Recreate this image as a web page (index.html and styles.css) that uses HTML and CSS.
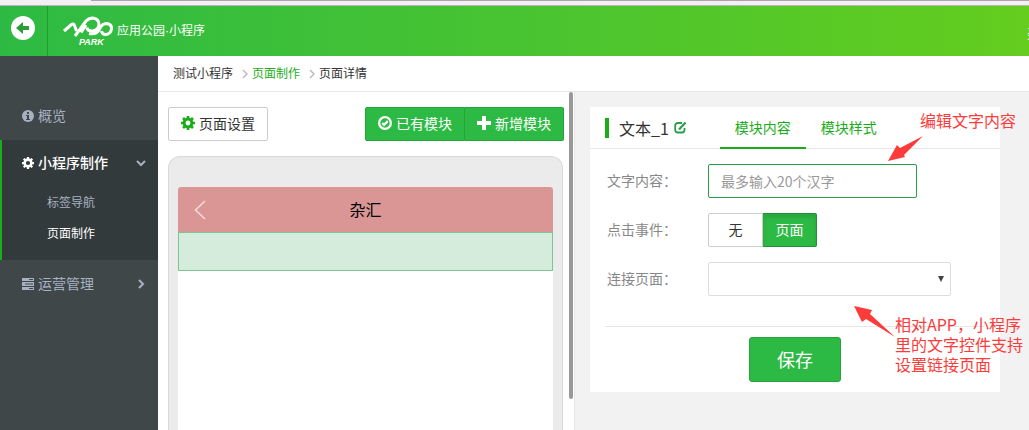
FILE: index.html
```html
<!DOCTYPE html>
<html lang="zh-CN">
<head>
    <meta charset="UTF-8">
    <meta name="viewport" content="width=device-width, initial-scale=1.0">
    <title>应用公园·小程序</title>
    <link rel="stylesheet" href="styles.css">
</head>
<body>
    <div class="strip"><div class="strip_line"></div></div>
    <header class="header">
        <a class="back" href="#" aria-label="返回">
            <svg width="24" height="24" viewBox="0 0 24 24"><circle cx="12" cy="12" r="12" fill="#fff"/><path d="M5 12l7-6v4h6v4h-6v4z" fill="#2b9f35"/></svg>
        </a>
        <a class="logo" href="#">
            <svg width="50" height="30" viewBox="0 0 50 30" fill="none" stroke="#fff" stroke-width="3">
                <path d="M1 15L8.500 8.500Q10.500 7 11.500 9.500L13.500 15M12 20L23 5Q26 2 30 2Q36 3 36 8.500Q35.500 14 30 15Q24.500 15.500 24 11.500M23 9L18 16.500"/>
                <path d="M26 17.500Q33 19 36 14L38 10.500Q40 7.500 44 7.500Q49 8.500 48.500 13Q47.500 18.500 42.500 18.500Q39 18.500 38.500 15"/>
                <text x="16" y="29" class="logo_sub">PARK</text>
            </svg>
            <span>应用公园·小程序</span>
        </a>
        <a class="user" href="#">美</a>
    </header>
    <div class="layout">
        <nav class="sidebar">
            <a class="menu" href="#">
                <svg width="12" height="12" viewBox="0 0 12 12"><circle cx="6" cy="6" r="6" fill="currentColor"/><path d="M5 2h2v2H5zM4 5h3v4h1v1H4V9h1V6H4z" fill="#404748"/></svg>
                <span>概览</span>
            </a>
            <div class="group">
                <a class="menu on" href="#">
                    <svg width="12" height="12" viewBox="0 0 16 16"><use href="#gear"/></svg>
                    <span>小程序制作</span>
                    <svg class="arrow" width="10" height="10" viewBox="0 0 10 10"><path d="M1 3l4 4 4-4" fill="none" stroke="#a7b1c2" stroke-width="2"/></svg>
                </a>
                <a class="sub" href="#">标签导航</a>
                <a class="sub on" href="#">页面制作</a>
            </div>
            <a class="menu" href="#">
                <svg width="12" height="12" viewBox="0 0 12 12"><path d="M0 0h12v3H0zM0 4h12v4H0zM0 9h12v3H0z" fill="currentColor"/><path d="M7 1.500h4M3 6h8M7 10.500h4" stroke="#404748"/></svg>
                <span>运营管理</span>
                <svg class="arrow" width="10" height="10" viewBox="0 0 10 10"><path d="M3 1l4 4-4 4" fill="none" stroke="#a7b1c2" stroke-width="2"/></svg>
            </a>
        </nav>
        <main class="main">
            <div class="crumbs">
                <span>测试小程序</span>
                <svg width="6" height="10" viewBox="0 0 6 10"><path d="M1 1l4 4-4 4" fill="none" stroke="#bbb" stroke-width="1.500"/></svg>
                <a href="#">页面制作</a>
                <svg width="6" height="10" viewBox="0 0 6 10"><path d="M1 1l4 4-4 4" fill="none" stroke="#bbb" stroke-width="1.500"/></svg>
                <span>页面详情</span>
            </div>
            <div class="work">
                <section class="preview">
                    <div class="tools">
                        <button class="btn">
                            <svg class="green" width="14" height="14" viewBox="0 0 16 16"><use href="#gear"/></svg>
                            页面设置
                        </button>
                        <div class="btns">
                            <button class="btn btn_green">
                                <svg width="14" height="14" viewBox="0 0 15 15" fill="none" stroke="#fff"><circle cx="7.500" cy="7.500" r="6.300" stroke-width="2.400"/><path d="M4.500 7.500l2 2 4-4" stroke-width="2.400"/></svg>
                                已有模块
                            </button>
                            <button class="btn btn_green">
                                <svg width="14" height="14" viewBox="0 0 14 14"><path d="M5 0h4v5h5v4H9v5H5V9H0V5h5z" fill="#fff"/></svg>
                                新增模块
                            </button>
                        </div>
                    </div>
                    <div class="phone">
                        <div class="screen">
                            <div class="titlebar">
                                <svg width="12" height="20" viewBox="0 0 12 20"><path d="M11 1L1.500 10 11 19" fill="none" stroke="#f5dcdc" stroke-width="1.500"/></svg>
                                <span>杂汇</span>
                            </div>
                            <div class="block"></div>
                        </div>
                    </div>
                    <div class="scrollbar"></div>
                </section>
                <section class="editor">
                    <form class="card">
                        <div class="card_head">
                            <h2>文本_1</h2>
                            <svg width="13" height="13" viewBox="0 0 13 13" fill="none" stroke="#2a9d4a"><path d="M8 2H4Q1.200 2 1.200 4.500V9Q1.200 11.500 4 11.500H8Q10.500 11.500 10.500 9V7" stroke-width="1.800"/><path d="M5 8.500L11.500 1.500" stroke-width="2.200"/></svg>
                            <div class="tabs">
                                <a class="tab on" href="#">模块内容</a>
                                <a class="tab" href="#">模块样式</a>
                            </div>
                        </div>
                        <div class="fields">
                            <div class="row">
                                <label for="txt">文字内容：</label>
                                <input id="txt" class="text" type="text" placeholder="最多输入20个汉字">
                            </div>
                            <div class="row">
                                <span class="label">点击事件：</span>
                                <div class="btns">
                                    <button type="button" class="btn opt">无</button>
                                    <button type="button" class="btn btn_green opt picked">页面</button>
                                </div>
                            </div>
                            <div class="row">
                                <label for="link">连接页面：</label>
                                <div class="select">
                                    <select id="link"><option></option></select>
                                    <svg width="6" height="6" viewBox="0 0 6 6"><path d="M0 0h6L3 6z" fill="#444"/></svg>
                                </div>
                            </div>
                        </div>
                        <div class="foot">
                            <button type="button" class="btn btn_green save">保存</button>
                        </div>
                    </form>
                    <p class="note note_text">编辑文字内容</p>
                    <svg class="note arrow_text" width="36" height="25" viewBox="0 0 36 25"><path d="M35 0L16 19l1 2L0 25 9 9l3 3z" fill="#fc3b3a"/></svg>
                    <p class="note note_link">相对APP，小程序<br>里的文字控件支持<br>设置链接页面</p>
                    <svg class="note arrow_link" width="42" height="32" viewBox="0 0 42 32"><path d="M0 0l18 4-2 4 25 23L12 13l-4 3z" fill="#fc3b3a"/></svg>
                </section>
            </div>
        </main>
    </div>
    <!-- shared gear icon -->
    <svg class="defs" width="0" height="0">
        <symbol id="gear" viewBox="0 0 16 16">
            <circle cx="8" cy="8" r="4.500" fill="none" stroke="currentColor" stroke-width="3.400"/>
            <path d="M8 0v3M8 13v3M0 8h3M13 8h3M2.300 2.300l2.200 2.200M11.500 11.500l2.200 2.200M2.300 13.700l2.200-2.200M11.500 4.500l2.200-2.200" stroke="currentColor" stroke-width="3"/>
        </symbol>
    </svg>
</body>
</html>
```

FILE: styles.css
```css
* {
    box-sizing: border-box;
}
body {
    margin: 0;
    height: 100vh;
    display: flex;
    flex-direction: column;
    overflow: hidden;
    font-family: "Noto Sans CJK SC", sans-serif;
    font-size: 14px;
    line-height: 20px;
    color: #333;
}
a {
    text-decoration: none;
    color: #1aad19;
}
svg {
    flex: none;
}
button, input, select {
    font: inherit;
    color: inherit;
    margin: 0;
}
.defs {
    position: absolute;
}
.strip {
    flex: none;
    height: 6px;
    background: #f2f0f2;
    border-bottom: 1px solid #b9b5ba;
}
.strip_line {
    margin-left: 91px;
    height: 1px;
    background: #aaa6aa;
}
.header {
    flex: none;
    position: relative;
    display: flex;
    height: 50px;
    background: linear-gradient(to right, #2dba44, #64cd1e);
    overflow: hidden;
}
.back {
    width: 48px;
    padding: 10px 0 0 11px;
    border-right: 1px solid #1f9f2a;
}
.logo {
    display: flex;
    align-items: center;
    gap: 4px;
    padding-left: 15px;
    font-family: "Liberation Sans", "Noto Sans CJK SC", sans-serif;
    font-size: 12px;
    color: #fff;
}
.logo_sub {
    font: italic bold 9px "Liberation Sans", sans-serif;
    fill: #fff;
    stroke: none;
}
.user {
    position: absolute;
    right: -12px;
    top: 16px;
    color: #fff;
}
.layout {
    flex: 1;
    display: flex;
    min-height: 0;
}
.sidebar {
    flex: none;
    width: 158px;
    padding-top: 36px;
    background: #404748;
}
.menu {
    display: flex;
    align-items: center;
    gap: 4px;
    height: 48px;
    padding: 0 12px 0 22px;
    color: #a7b1c2;
}
.menu span, .crumbs span, .crumbs a {
    padding-bottom: 2px;
}
.arrow {
    margin-left: auto;
}
.group {
    height: 120px;
    background: #333a3b;
    border-left: 2px solid #1aad19;
}
.group .menu {
    height: 46px;
    padding-left: 20px;
}
.sub {
    display: block;
    padding-left: 45px;
    font-size: 12px;
    line-height: 31px;
    color: #a7b1c2;
}
.menu.on, .sub.on {
    color: #fff;
}
.menu.on {
    font-weight: 500;
}
.main {
    flex: 1;
    display: flex;
    flex-direction: column;
    min-width: 0;
}
.crumbs {
    flex: none;
    display: flex;
    align-items: center;
    height: 36px;
    padding-left: 15px;
    border-bottom: 1px solid #e7e7e7;
    font-size: 12px;
}
.crumbs svg {
    margin: 0 4px 0 9px;
}
.work {
    flex: 1;
    display: flex;
    min-height: 0;
}
.preview {
    position: relative;
    flex: none;
    display: flex;
    flex-direction: column;
    width: 417px;
    padding: 15px 11px 0 10px;
    border-right: 1px solid #e7e7e7;
}
.tools {
    display: flex;
    justify-content: space-between;
    margin-right: -1px;
}
.btns {
    display: flex;
}
.btn {
    display: flex;
    align-items: center;
    justify-content: center;
    gap: 4px;
    height: 34px;
    padding: 0 12px 2px;
    background: #fff;
    border: 1px solid #ccc;
    border-radius: 2px;
}
.green {
    color: #1aad19;
}
.btn_green {
    color: #fff;
    background: #2dba44;
    border-color: #27a33b;
}
.btns .btn:first-child {
    border-radius: 2px 0 0 2px;
}
.btns .btn:last-child {
    border-left: 0;
    border-radius: 0 2px 2px 0;
}
.phone {
    flex: 1;
    display: flex;
    margin-top: 15px;
    padding: 30px 9px 0;
    background: #ebebeb;
    border: 1px solid #d9d9d9;
    border-bottom: 0;
    border-radius: 12px 12px 0 0;
}
.screen {
    flex: 1;
    background: #fff;
    border-radius: 3px 3px 0 0;
    overflow: hidden;
}
.titlebar {
    display: flex;
    align-items: center;
    height: 45px;
    padding: 0 28px 0 16px;
    background: #d99694;
    color: #000;
    font-size: 16px;
}
.titlebar span {
    flex: 1;
    padding-bottom: 2px;
    text-align: center;
}
.block {
    height: 39px;
    background: #d5ebdc;
    border: 1px solid #7dc78f;
}
.scrollbar {
    position: absolute;
    top: 0;
    right: 1px;
    width: 4px;
    height: 307px;
    background: #999;
    border-radius: 2px;
}
.editor {
    position: relative;
    flex: 1;
    padding: 15px 29px 0 15px;
    background: #f2f2f2;
}
.card {
    background: #fff;
}
.card_head {
    display: flex;
    align-items: center;
    height: 42px;
    padding-left: 15px;
    border-bottom: 1px solid #e7e7e7;
}
.card_head h2 {
    margin: 0 5px 0 0;
    padding-left: 10px;
    border-left: 4px solid #1aad19;
    font-size: 16px;
    font-weight: 400;
}
.tabs {
    display: flex;
    align-self: stretch;
    margin: 0 0 -1px 33px;
}
.tab {
    padding: 0 15px;
    line-height: 40px;
    border-bottom: 2px solid transparent;
}
.tab.on {
    border-color: #1aad19;
}
.fields {
    display: flex;
    flex-direction: column;
    gap: 15px;
    margin: 0 15px;
    padding: 15px 0 30px 2px;
    border-bottom: 1px solid #e7e7e7;
}
.row {
    display: flex;
    align-items: center;
    color: #888;
}
.row label, .label {
    width: 101px;
    padding-bottom: 2px;
}
.text {
    width: 209px;
    height: 34px;
    padding: 0 12px;
    border: 1px solid #2a9d4a;
    border-radius: 2px;
    outline: 0;
}
.text::placeholder {
    color: #999;
}
.opt {
    min-width: 55px;
    color: #333;
}
.picked {
    min-width: 54px;
    color: #fff;
    border-color: #22903a;
    box-shadow: inset 0 3px 5px rgba(0, 0, 0, 0.125);
}
.select {
    position: relative;
    width: 243px;
}
.select select {
    display: block;
    width: 100%;
    height: 34px;
    background: #fff;
    border: 1px solid #ddd;
    border-radius: 2px;
    appearance: none;
}
.select svg {
    position: absolute;
    right: 7px;
    top: 14px;
    pointer-events: none;
}
.foot {
    display: flex;
    justify-content: center;
    padding: 10px 0;
}
.save {
    width: 92px;
    height: 45px;
    font-size: 18px;
    border-radius: 3px;
}
/* red hints over the form */
.note {
    position: absolute;
    margin: 0;
    font-size: 16px;
    color: #fc3b3a;
    white-space: nowrap;
}
.note_text {
    left: 345px;
    top: 18px;
}
.arrow_text {
    left: 313px;
    top: 44px;
}
.note_link {
    left: 320px;
    top: 222px;
}
.arrow_link {
    left: 279px;
    top: 214px;
}
```
